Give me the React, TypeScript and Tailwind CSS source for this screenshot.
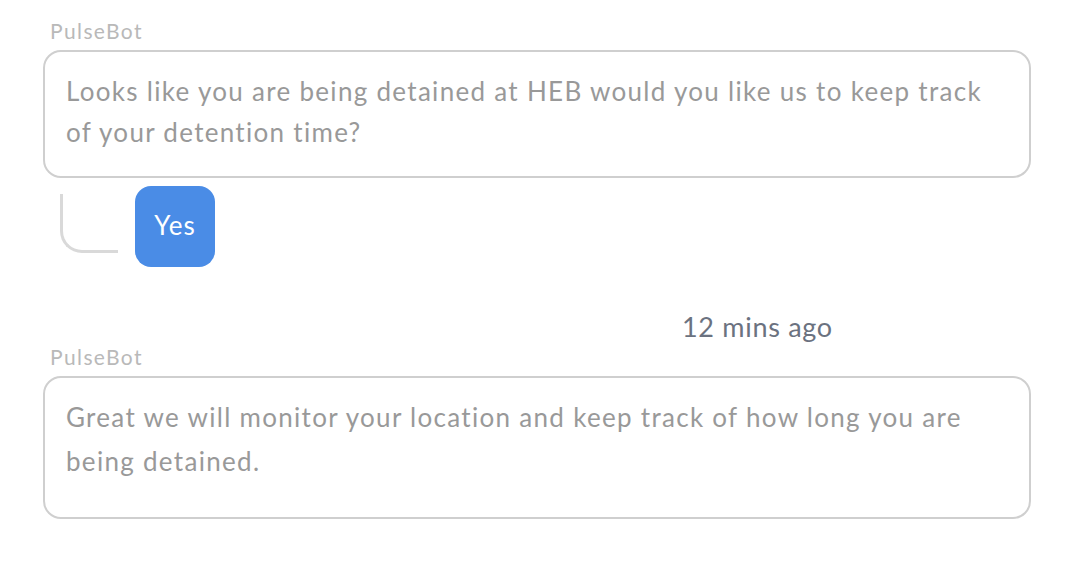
export default function App() {
  return (
    <div className="min-h-screen bg-white font-['Lato','Noto_Sans',sans-serif]">
      <div className="ml-[43px] w-[988px] pt-[17px]">
        <div className="pl-[7px] text-[21px] leading-[28px] tracking-[1.4px] text-[#b9b9b9]">PulseBot</div>
        <div className="mt-[5px] rounded-[18px] border-2 border-[#cfcfcf] px-[21px] pt-[19px] pb-[23px] text-[26px] leading-[41px] tracking-[1.3px] text-[#999999]">
          Looks like you are being detained at HEB would you like us to keep track
          <br />
          of your detention time?
        </div>
        <div className="mt-[8px] flex items-start">
          <div className="mt-[8px] ml-[17px] h-[59px] w-[58px] rounded-bl-[22px] border-b-[3px] border-l-[3px] border-[#d9d9d9]" />
          <button className="ml-[17px] flex h-[81px] w-[80px] items-center justify-center rounded-[16px] bg-[#4a8ce6] pb-[2px] text-[26px] tracking-[1px] text-white">
            Yes
          </button>
        </div>
        <div className="mt-[44px] pl-[639px] text-[27px] leading-[32px] tracking-[0.7px] text-[#6b7280]">12 mins ago</div>
        <div className="pl-[7px] text-[21px] leading-[28px] tracking-[1.4px] text-[#b9b9b9]">PulseBot</div>
        <div className="mt-[5px] h-[143px] rounded-[18px] border-2 border-[#cfcfcf] px-[21px] pt-[17px] text-[26px] leading-[44px] tracking-[1.3px] text-[#999999]">
          Great we will monitor your location and keep track of how long you are
          <br />
          being detained.
        </div>
      </div>
    </div>
  );
}
